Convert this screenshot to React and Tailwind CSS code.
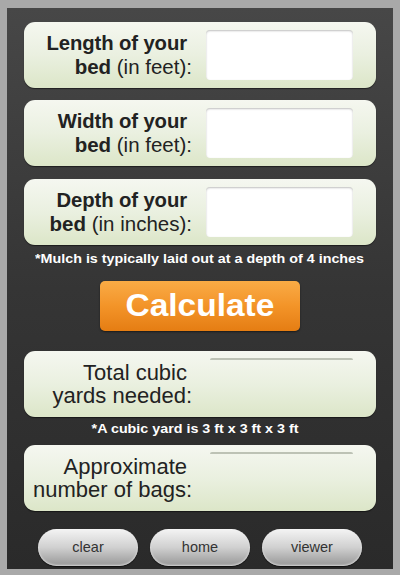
import React from "react";

const font = { fontFamily: '"Liberation Sans", Arial, Helvetica, sans-serif' };

function Card({ l1, l2, l2b, input, result, bold, mt }) {
  return (
    <div
      className={`mx-[17px] h-[66px] rounded-[11px] bg-gradient-to-b from-[#f5f7f0] via-[#eaf0e0] to-[#dce6c8] shadow-[0_1px_1px_rgba(0,0,0,0.5)] flex items-center ${mt}`}
    >
      <div className="w-[168px] text-right text-[#222] leading-[23px]">
        <div className={`pr-[5px] ${bold ? "font-bold text-[20.3px] tracking-[-0.1px]" : "text-[22px]"}`}>{l1}</div>
        <div className={`${bold ? "text-[20.5px]" : "text-[22px]"}`}>
          {l2b && <span className="font-bold">{l2b} </span>}
          {l2}
        </div>
      </div>
      {input && (
        <div className="ml-[14px] w-[147px] h-[50px] rounded-[4px] bg-white shadow-[inset_0_1px_2px_rgba(0,0,0,0.25)]" />
      )}
      {result && (
        <div className="ml-[18px] w-[143px] h-[58px] self-start mt-[7px] border-t-[2px] border-[#b8bdb0] rounded-t-[2px] opacity-90" />
      )}
    </div>
  );
}

function Pill({ children }) {
  return (
    <div className="w-[100px] h-[37px] rounded-full bg-gradient-to-b from-[#f4f4f4] via-[#d0d0d0] to-[#979797] shadow-[inset_0_-1px_2px_rgba(255,255,255,0.6),0_1px_1px_rgba(0,0,0,0.6)] flex items-center justify-center text-[14.5px] text-[#333]">
      {children}
    </div>
  );
}

export default function App() {
  return (
    <div style={font} className="w-[400px] h-[575px] bg-[#a9a9a9] pt-[8px] pl-[7px] pr-[7px] pb-[6px]">
      <div className="h-[561px] bg-gradient-to-b from-[#474747] via-[#353535] to-[#2a2a2a] pt-[14px] flex flex-col">
        <Card l1="Length of your" l2b="bed" l2="(in feet):" input bold mt="" />
        <Card l1="Width of your" l2b="bed" l2="(in feet):" input bold mt="mt-[12px]" />
        <Card l1="Depth of your" l2b="bed" l2="(in inches):" input bold mt="mt-[13px]" />
        <div className="mt-[6px] h-[16px] flex justify-center">
          <span className="text-white font-bold text-[13px] leading-[16px] scale-x-[1.1] whitespace-nowrap">
            *Mulch is typically laid out at a depth of 4 inches
          </span>
        </div>
        <div className="mt-[14px] mx-auto w-[200px] h-[50px] rounded-[5px] bg-gradient-to-b from-[#f9ab45] via-[#f39428] to-[#e57d12] shadow-[0_1px_2px_rgba(0,0,0,0.5)] flex items-center justify-center">
          <span className="text-white font-bold text-[31px] scale-x-[1.08]">Calculate</span>
        </div>
        <Card l1="Total cubic" l2="yards needed:" result mt="mt-[20px]" />
        <div className="mt-[4px] h-[16px] flex justify-center pr-[10px]">
          <span className="text-white font-bold text-[13px] leading-[16px] scale-x-[1.1] whitespace-nowrap">
            *A cubic yard is 3 ft x 3 ft x 3 ft
          </span>
        </div>
        <Card l1="Approximate" l2="number of bags:" result mt="mt-[8px]" />
        <div className="mt-[18px] flex gap-[12px] pl-[31px]">
          <Pill>clear</Pill>
          <Pill>home</Pill>
          <Pill>viewer</Pill>
        </div>
      </div>
    </div>
  );
}
